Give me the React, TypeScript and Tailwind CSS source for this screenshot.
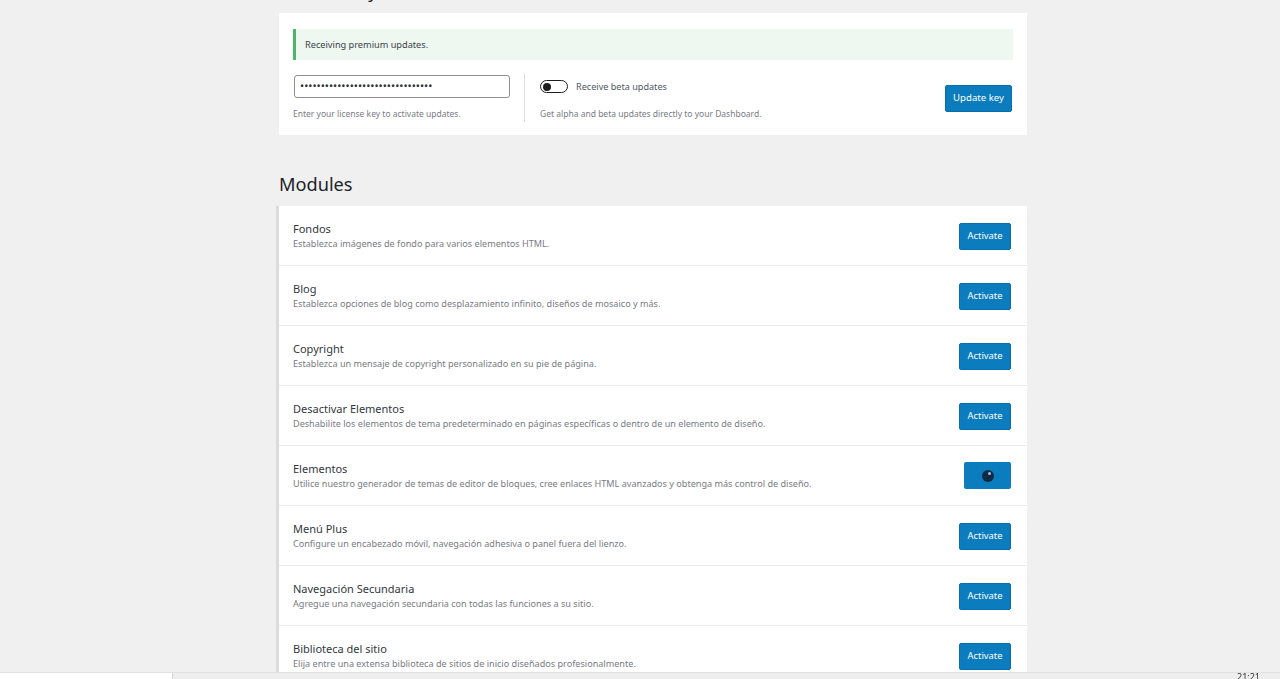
import React from 'react';

interface Module {
  name: string;
  description: string;
  loading?: boolean;
}

const modules: Module[] = [
  { name: 'Fondos', description: 'Establezca imágenes de fondo para varios elementos HTML.' },
  { name: 'Blog', description: 'Establezca opciones de blog como desplazamiento infinito, diseños de mosaico y más.' },
  { name: 'Copyright', description: 'Establezca un mensaje de copyright personalizado en su pie de página.' },
  {
    name: 'Desactivar Elementos',
    description: 'Deshabilite los elementos de tema predeterminado en páginas específicas o dentro de un elemento de diseño.',
  },
  {
    name: 'Elementos',
    description: 'Utilice nuestro generador de temas de editor de bloques, cree enlaces HTML avanzados y obtenga más control de diseño.',
    loading: true,
  },
  { name: 'Menú Plus', description: 'Configure un encabezado móvil, navegación adhesiva o panel fuera del lienzo.' },
  { name: 'Navegación Secundaria', description: 'Agregue una navegación secundaria con todas las funciones a su sitio.' },
  { name: 'Biblioteca del sitio', description: 'Elija entre una extensa biblioteca de sitios de inicio diseñados profesionalmente.' },
  { name: 'Spacing', description: 'Establezca el relleno y el espaciado general entre los elementos.' },
];

const font = { fontFamily: '"Segoe UI", "Noto Sans", "Open Sans", sans-serif' };

function ModuleRow({ module }: { module: Module }) {
  return (
    <div className="flex items-center justify-between h-[60px] pl-[14px] pr-[16px] bg-white border-b border-[#ececee]">
      <div className="flex flex-col">
        <span className="text-[11px] leading-[15px] text-[#32373c]">{module.name}</span>
        <span className="text-[9.1px] leading-[15px] text-[#787c82]">{module.description}</span>
      </div>
      {module.loading ? (
        <div className="w-[47px] h-[27px] rounded-[2px] bg-[#0b7cbd] flex items-center justify-center">
          <div className="relative w-[12px] h-[12px] rounded-full bg-[#0f2a44]">
            <div className="absolute top-[2px] left-[6px] w-[3px] h-[3px] rounded-full bg-[#9fc4e6]" />
          </div>
        </div>
      ) : (
        <button className="w-[52px] h-[27px] rounded-[2px] bg-[#0b7cbd] text-white text-[9.4px] border border-[#0a6fa8] mt-[1px]">
          Activate
        </button>
      )}
    </div>
  );
}

export default function App() {
  return (
    <div className="min-h-screen bg-[#f0f0f1] overflow-hidden" style={font}>
      <div className="w-[748px] ml-[279px]">
        {/* License key section (heading scrolled off the top) */}
        <h2 className="text-[18.2px] leading-[24px] text-[#1d2327] mt-[-21px] mb-[10px] h-[24px]">License Key</h2>
        <div className="bg-white px-[14px] pt-[16px] pb-[13px]">
          <div className="h-[31px] flex items-center bg-[#eef7f0] border-l-[3px] border-[#4ab866] pl-[9px] text-[9.2px] text-[#3c434a]">
            Receiving premium updates.
          </div>
          <div className="flex items-center mt-[14px]">
            <div className="w-[231px] pr-[15px]">
              <div className="h-[23px] w-[216px] ml-[1px] border border-[#8c8f94] rounded-[3px] flex items-center px-[5px] text-[11px] text-[#2c3338] overflow-hidden">
                ••••••••••••••••••••••••••••••••
              </div>
              <div className="text-[8.5px] text-[#787c82] mt-[10px]">Enter your license key to activate updates.</div>
            </div>
            <div className="border-l border-[#dcdcde] h-[48px] pl-[15px] flex-1 flex flex-col justify-between">
              <div className="flex items-center gap-[8px] mt-[6px]">
                <div className="w-[28px] h-[13px] rounded-full border border-[#1e1e1e] relative">
                  <div className="absolute left-[2px] top-[1.5px] w-[8px] h-[8px] rounded-full bg-[#1e1e1e]" />
                </div>
                <span className="text-[9.1px] text-[#50575e]">Receive beta updates</span>
              </div>
              <div className="text-[8.5px] text-[#787c82] mb-[1px]">Get alpha and beta updates directly to your Dashboard.</div>
            </div>
            <button className="w-[67px] h-[27px] rounded-[2px] bg-[#0b7cbd] border border-[#0a6fa8] text-white text-[9.6px] mr-[1px]">
              Update key
            </button>
          </div>
        </div>

        <h2 className="text-[18.2px] leading-[24px] text-[#1d2327] mt-[37px] mb-[10px]">Modules</h2>
        <div className="border-l-[3px] border-[#dcdcde] -ml-[3px]">
          {modules.map((m) => (
            <ModuleRow key={m.name} module={m} />
          ))}
        </div>
      </div>

      {/* taskbar strip cut at the bottom */}
      <div className="fixed bottom-0 left-0 right-0 h-[7px] bg-[#eeeeee] border-t border-[#e2e2e2] flex">
        <div className="w-[173px] h-full bg-white border-r border-[#d4d4d4]" />
        <div className="flex-1" />
        <span className="text-[9px] leading-[6px] text-[#333] mr-[20px] mt-[1px]">21:21</span>
      </div>
    </div>
  );
}
